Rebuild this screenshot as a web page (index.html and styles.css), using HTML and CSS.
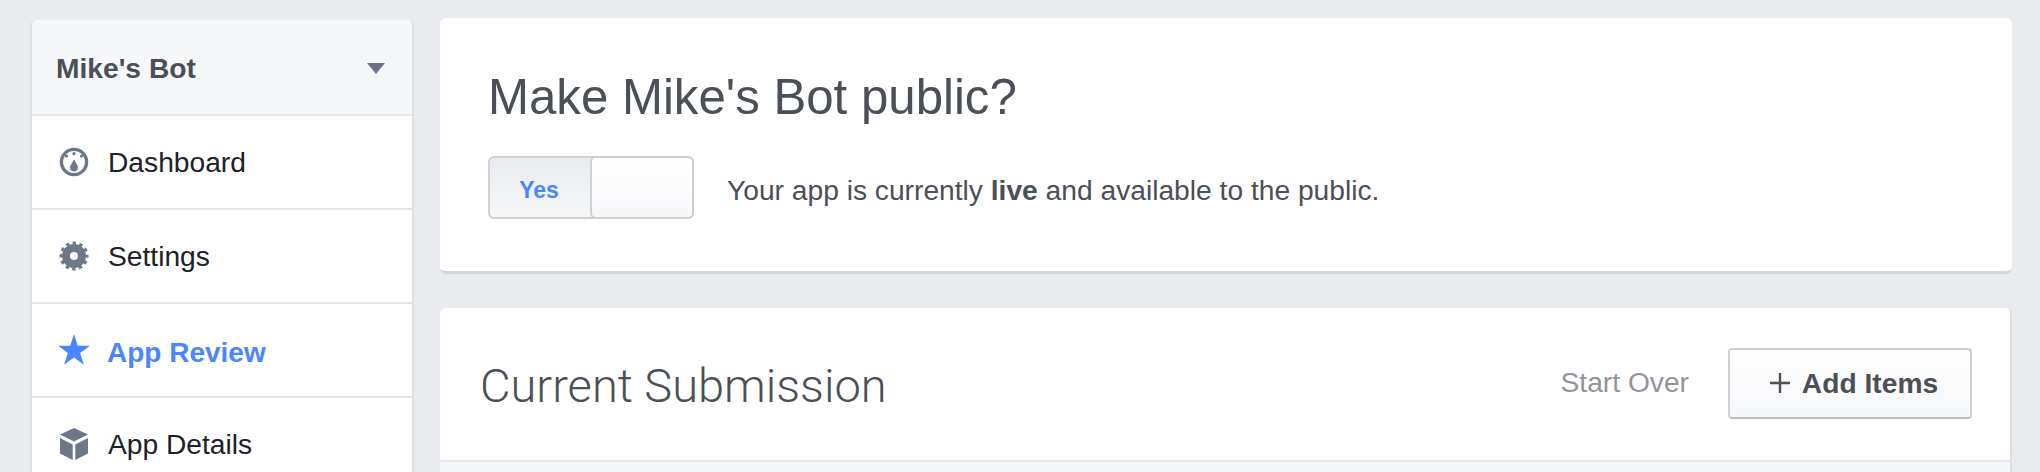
FILE: index.html
```html
<!DOCTYPE html>
<html lang="en">

<head>
    <meta charset="utf-8">
    <title>App Review</title>
    <link rel="stylesheet" href="styles.css">
</head>

<body>
    <div class="page">
        <div class="side-nav">
            <div class="nav-head">
                <span>Mike's Bot</span>
                <i class="caret"></i>
            </div>
            <a class="nav-item" href="#">
                <svg class="nav-icon" viewBox="0 0 32 32">
                    <circle cx="16" cy="16" r="12.600" fill="none" stroke="#6d7787" stroke-width="3.400" />
                    <circle cx="8.500" cy="10" r="1.600" fill="#6d7787" />
                    <circle cx="16" cy="7.700" r="1.600" fill="#6d7787" />
                    <circle cx="23.500" cy="10" r="1.600" fill="#6d7787" />
                    <path d="M16 13.500l3.500 6a4 4 0 1 1-7 0z" fill="#6d7787" />
                </svg>
                <span class="nav-text">Dashboard</span>
            </a>
            <a class="nav-item" href="#">
                <svg class="nav-icon" viewBox="0 0 32 32">
                    <circle cx="16" cy="16" r="8" fill="none" stroke="#6d7787" stroke-width="8" />
                    <circle cx="16" cy="16" r="12.500" fill="none" stroke="#6d7787" stroke-width="4" stroke-dasharray="3.270 3.270" stroke-dashoffset="1.635" />
                </svg>
                <span class="nav-text">Settings</span>
            </a>
            <a class="nav-item active" href="#">
                <svg class="nav-icon" viewBox="0 0 32 32">
                    <path d="M16 0l3.800 11.700H32l-9.900 7.200 3.800 11.800L16 23.400 6.100 30.700l3.800-11.800L0 11.700h12.200z" fill="#4a86ff" />
                </svg>
                <span class="nav-text">App Review</span>
            </a>
            <a class="nav-item" href="#">
                <svg class="nav-icon" viewBox="0 0 32 32">
                    <path d="M16 0l14 6.500L16 13.500 2 6.500zM2 10l12.700 6.500V32L2 25.500zM30 10l-12.700 6.500V32L30 25.500z" fill="#6d7787" />
                </svg>
                <span class="nav-text">App Details</span>
            </a>
        </div>
        <div class="main">
            <div class="card public-card">
                <h2 class="public-title">Make Mike's Bot public?</h2>
                <div class="public-row">
                    <div class="toggle">
                        <span class="toggle-label">Yes</span>
                        <span class="toggle-knob"></span>
                    </div>
                    <span class="public-text">Your app is currently <b>live</b> and available to the public.</span>
                </div>
            </div>
            <div class="card submit-card">
                <div class="submit-head">
                    <h2 class="submit-title">Current Submission</h2>
                    <a class="start-over" href="#">Start Over</a>
                    <a class="add-btn" href="#">
                        <svg class="add-icon" viewBox="0 0 20 20">
                            <path d="M10 0v20M0 10h20" stroke="#4b4f56" stroke-width="2.400" />
                        </svg>
                        <span>Add Items</span>
                    </a>
                </div>
                <div class="submit-body"></div>
            </div>
        </div>
    </div>
</body>

</html>
```

FILE: styles.css
```css
html,
body {
    margin: 0;
    height: 472px;
    overflow: hidden;
    background: #e9ebee;
}

body {
    font-family: "Liberation Sans", Arial, sans-serif;
    font-size: 28.2px;
}

.page {
    display: flex;
    align-items: flex-start;
    padding: 18px 28px 0 30px;
}

.side-nav {
    width: 384px;
    flex: none;
    margin-top: 2px;
    background: #fff;
    border: 2px solid #dddfe2;
    border-top: 0;
    border-bottom: 0;
    border-radius: 6px 6px 0 0;
    box-sizing: border-box;
}

.nav-head {
    display: flex;
    align-items: center;
    justify-content: space-between;
    height: 96px;
    padding: 2px 27px 0 24px;
    box-sizing: border-box;
    background: #f6f7f9;
    border-bottom: 2px solid #e5e6e9;
    border-radius: 6px 6px 0 0;
    font-weight: bold;
    color: #4b4f56;
}

.caret {
    width: 0;
    height: 0;
    border-left: 9px solid transparent;
    border-right: 9px solid transparent;
    border-top: 11px solid #6d7287;
}

.nav-item {
    display: flex;
    align-items: center;
    height: 94px;
    padding-left: 26px;
    box-sizing: border-box;
    border-bottom: 2px solid #e5e6e9;
    color: #1d2129;
    text-decoration: none;
}

.nav-icon {
    width: 32px;
    height: 32px;
    flex: none;
    margin-right: 18px;
}

.active {
    color: #4a86ff;
    font-size: 28px;
    font-weight: bold;
}

.active .nav-icon {
    margin-right: 17px;
}

.active .nav-text {
    padding-top: 5px;
}

.main {
    flex: 1;
    margin-left: 26px;
}

.card {
    background: #fff;
    border-radius: 6px;
    box-sizing: border-box;
}

.public-card {
    height: 256px;
    padding: 48px 48px 0;
    border-bottom: 3px solid #d3d6db;
}

.public-title {
    margin: 0;
    font-size: 49.2px;
    font-weight: normal;
    line-height: 62px;
    color: #4b4f56;
}

.public-row {
    display: flex;
    align-items: center;
    margin-top: 28px;
}

.toggle {
    display: flex;
    width: 206px;
    height: 63px;
    box-sizing: border-box;
    border: 2px solid #ced0d4;
    border-radius: 6px;
    background: linear-gradient(#e9ebee, #f6f7f9);
}

.toggle-label {
    width: 98px;
    margin-right: 2px;
    text-align: center;
    line-height: 64px;
    font-size: 23px;
    font-weight: bold;
    color: #4a86ff;
}

.toggle-knob {
    flex: 1;
    margin: -2px -2px -2px 0;
    border: 2px solid #ced0d4;
    border-radius: 6px;
    background: linear-gradient(#fff, #f6f7f9);
}

.public-text {
    margin-left: 33px;
    padding-top: 5px;
    color: #4b4f56;
}

.submit-card {
    margin-top: 34px;
    height: 200px;
    border-right: 2px solid #dddfe2;
}

.submit-head {
    display: flex;
    align-items: center;
    height: 154px;
    padding: 0 38px 2px 40px;
    box-sizing: border-box;
    border-bottom: 2px solid #e5e6e9;
}

.submit-title {
    flex: 1;
    margin: 0;
    padding-top: 4px;
    font-family: Roboto, "Liberation Sans", sans-serif;
    font-size: 47px;
    font-weight: 300;
    color: #4b4f56;
}

.start-over {
    margin-right: 39px;
    padding-bottom: 2px;
    color: #90949c;
    text-decoration: none;
}

.add-btn {
    display: flex;
    align-items: center;
    justify-content: center;
    width: 244px;
    height: 71px;
    padding: 0 0 0 8px;
    box-sizing: border-box;
    border: 2px solid #ced0d4;
    border-bottom-color: #bbbdc0;
    border-radius: 4px;
    background: linear-gradient(#fff, #f6f7f9);
    color: #4b4f56;
    font-weight: bold;
    text-decoration: none;
}

.add-icon {
    width: 20px;
    height: 20px;
    margin-right: 12px;
}

.submit-body {
    height: 48px;
    background: #f6f7f9;
}
```
